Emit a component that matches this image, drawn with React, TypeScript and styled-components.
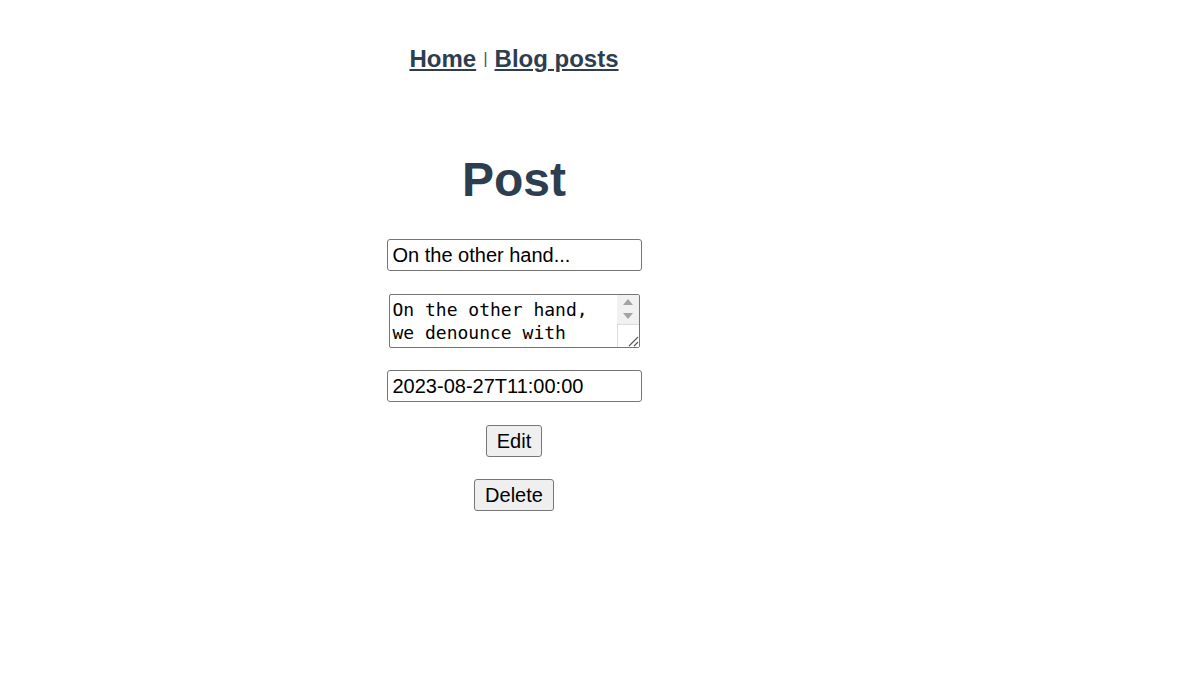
import React from "react";
import styled, { createGlobalStyle } from "styled-components";

const Global = createGlobalStyle`
  html, body { margin: 0; padding: 0; background: #fff; }
  body { font-family: "Liberation Sans", Helvetica, Arial, sans-serif; }
`;

const Page = styled.div`
  width: 1028px;
  display: flex;
  flex-direction: column;
  align-items: center;
  color: #2c3e50;
  text-align: center;
  -webkit-font-smoothing: antialiased;
`;

const Nav = styled.nav`
  margin-top: 45px;
  font-size: 24px;
  font-weight: bold;
  display: flex;
  align-items: baseline;
  gap: 7px;
`;

const NavLink = styled.a`
  color: #2c3e50;
  text-decoration: underline;
  cursor: pointer;
`;

const Sep = styled.span`
  align-self: center;
  font-weight: normal;
  font-size: 17px;
  line-height: 18px;
  color: #4a5866;
`;

const Title = styled.h1`
  margin: 79px 0 0;
  font-size: 48px;
  font-weight: bold;
  line-height: 56px;
`;

const Form = styled.form`
  margin-top: 31px;
  display: flex;
  flex-direction: column;
  align-items: center;
`;

const TextInput = styled.input<{ $gap: number }>`
  box-sizing: border-box;
  width: 255px;
  height: 32px;
  padding: 0 5px;
  border: 1px solid #767676;
  border-radius: 3px;
  font-family: "Liberation Sans", Arial, sans-serif;
  font-size: 20px;
  color: #000;
  background: #fff;
  margin-bottom: ${(p) => p.$gap}px;
`;

const AreaWrap = styled.div`
  position: relative;
  width: 251px;
  height: 54px;
  margin-bottom: 22px;
`;

const TextArea = styled.textarea`
  box-sizing: border-box;
  width: 251px;
  height: 54px;
  padding: 3px 26px 2px 3px;
  border: 1px solid #767676;
  border-radius: 2px;
  font-family: "DejaVu Sans Mono", "Liberation Mono", monospace;
  font-size: 18px;
  line-height: 23px;
  color: #000;
  resize: none;
  overflow: hidden;
  display: block;
`;

const ScrollBar = styled.div`
  position: absolute;
  top: 1px;
  right: 1px;
  bottom: 1px;
  width: 22px;
  display: flex;
  flex-direction: column;
  background: #f1f1f1;
  pointer-events: none;
`;

const ArrowBtn = styled.div`
  height: 14px;
  display: flex;
  align-items: center;
  justify-content: center;
`;

const Corner = styled.div`
  margin-top: auto;
  height: 22px;
  background: #fff;
  border-top: 1px solid #dcdcdc;
  border-left: 1px solid #dcdcdc;
  display: flex;
  align-items: flex-end;
  justify-content: flex-end;
`;

const Button = styled.button`
  box-sizing: border-box;
  height: 32px;
  padding: 0 10px;
  border: 1px solid #767676;
  border-radius: 3px;
  background: #efefef;
  font-family: "Liberation Sans", Arial, sans-serif;
  font-size: 20px;
  color: #000;
  margin-bottom: 22px;
`;

export default function App() {
  return (
    <>
      <Global />
      <Page>
        <Nav>
          <NavLink>Home</NavLink>
          <Sep>|</Sep>
          <NavLink>Blog posts</NavLink>
        </Nav>
        <Title>Post</Title>
        <Form onSubmit={(e) => e.preventDefault()}>
          <TextInput $gap={23} type="text" defaultValue="On the other hand..." />
          <AreaWrap>
            <TextArea defaultValue="On the other hand, we denounce with righteous indignation and dislike men who are so beguiled and demoralized by the charms of pleasure of the moment." />
            <ScrollBar>
              <ArrowBtn>
                <svg width="10" height="6" viewBox="0 0 10 6">
                  <path d="M0 6 L5 0 L10 6 Z" fill="#a3a3a3" />
                </svg>
              </ArrowBtn>
              <ArrowBtn>
                <svg width="10" height="6" viewBox="0 0 10 6">
                  <path d="M0 0 L10 0 L5 6 Z" fill="#a3a3a3" />
                </svg>
              </ArrowBtn>
              <Corner>
                <svg width="12" height="12" viewBox="0 0 12 12">
                  <path d="M11 2 L2 11 M11 7 L7 11" stroke="#5a5a5a" strokeWidth="1.2" />
                </svg>
              </Corner>
            </ScrollBar>
          </AreaWrap>
          <TextInput $gap={23} type="text" defaultValue="2023-08-27T11:00:00" />
          <Button type="button">Edit</Button>
          <Button type="button">Delete</Button>
        </Form>
      </Page>
    </>
  );
}
